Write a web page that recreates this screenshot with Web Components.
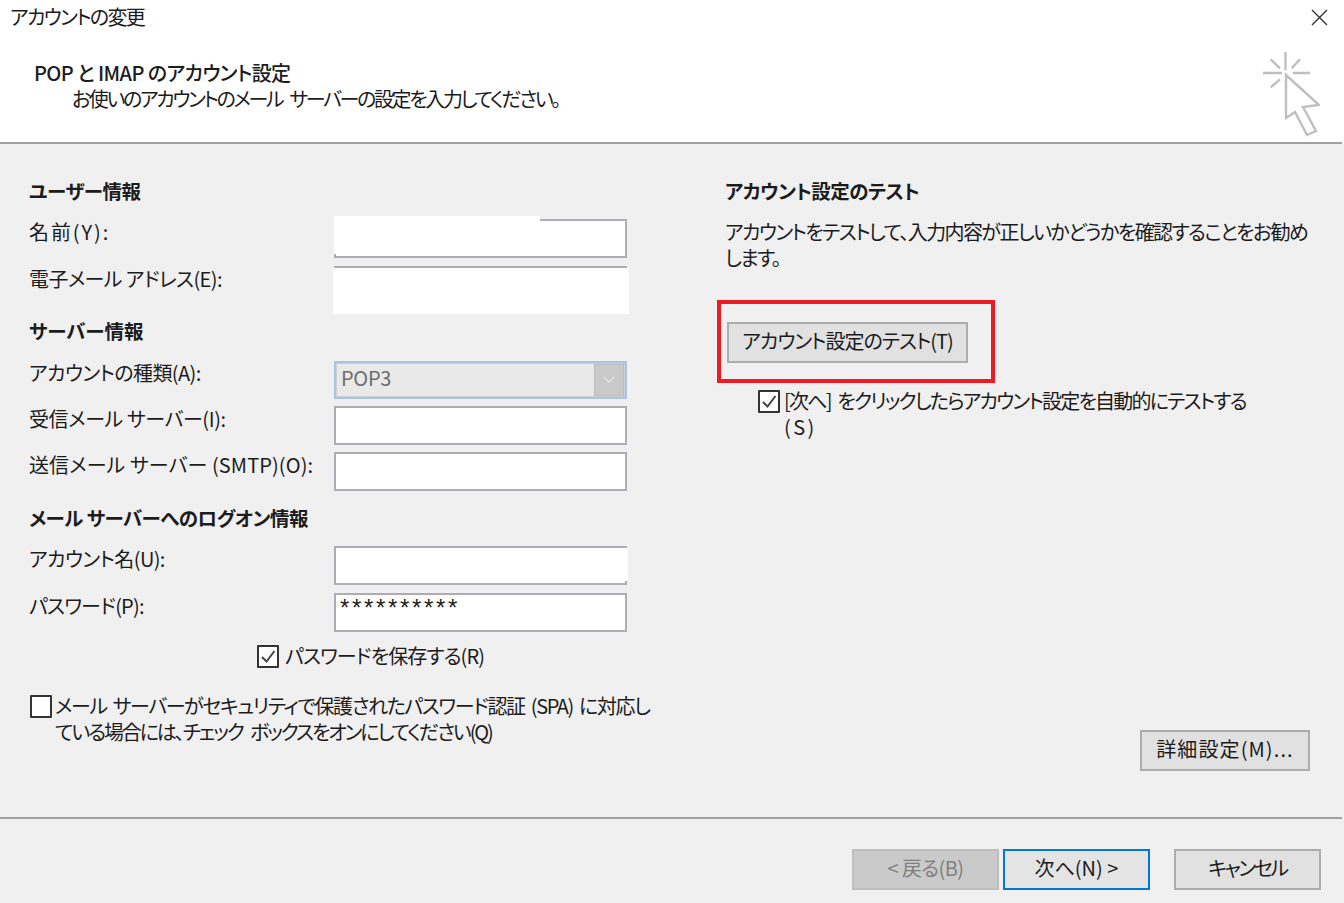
<!DOCTYPE html>
<html lang="ja"><head><meta charset="utf-8">
<style>
html,body{margin:0;padding:0;height:100%}
body{font-family:"Noto Sans CJK JP","Noto Sans",sans-serif;font-size:20px;color:#1c1c1c;background:#f0f0f0;font-feature-settings:"palt";letter-spacing:-.6px;overflow:hidden}
x-dialog{height:903px}
.l1{letter-spacing:-1.4px;word-spacing:3px}
.l2{letter-spacing:-2.1px;word-spacing:5px}
</style></head><body>
<x-dialog>
  <x-header slot="header" title-text="アカウントの変更" heading="POP と IMAP のアカウント設定" sub="お使いのアカウントのメール サーバーの設定を入力してください。"></x-header>
  <x-section slot="left" heading="ユーザー情報" top="0" gap="8">
    <x-row label="名前(Y):" ls="1.9" mask="name"></x-row>
    <x-row label="電子メール アドレス(E):" mask="email"></x-row>
  </x-section>
  <x-section slot="left" heading="サーバー情報" ls="0" top="15" gap="7" head-gap="18">
    <x-row label="アカウントの種類(A):" kind="select" value="POP3"></x-row>
    <x-row label="受信メール サーバー(I):" ls="-.4"></x-row>
    <x-row label="送信メール サーバー (SMTP)(O):" ls=".1"></x-row>
  </x-section>
  <x-section slot="left" heading="メール サーバーへのログオン情報" top="16" gap="8">
    <x-row label="アカウント名(U):" mask="right"></x-row>
    <x-row label="パスワード(P):" ls="-.8" value="**********"></x-row>
  </x-section>
  <x-check slot="left" checked style="margin:11px 0 0 228px;letter-spacing:-.9px;--gap:6px">パスワードを保存する(R)</x-check>
  <x-check slot="left" style="margin:24px 0 0 1px;--gap:3px"><span class="l1">メール サーバーがセキュリティで保護されたパスワード認証 (SPA) に対応し</span><br><span class="l2">ている場合には、チェック ボックスをオンにしてください(Q)</span></x-check>

  <x-test-panel slot="right"></x-test-panel>
  <x-btn slot="extra" style="width:170px;letter-spacing:1.1px">詳細設定(M)...</x-btn>

  <x-btn slot="footer" kind="disabled" style="width:147px">&lt; 戻る(B)</x-btn>
  <x-btn slot="footer" kind="default" style="width:147px;margin-left:4px;letter-spacing:0">次へ(N) &gt;</x-btn>
  <x-btn slot="footer" style="width:147px;margin-left:24px;letter-spacing:-2.4px">キャンセル</x-btn>
</x-dialog>
<script>
function def(name,css,html,init){
  customElements.define(name,class extends HTMLElement{
    connectedCallback(){
      if(this.shadowRoot)return;
      const s=this.attachShadow({mode:'open'});
      s.innerHTML='<style>'+css+'</style>'+(typeof html==='function'?html(this):html);
      if(init)init(this,s);
    }
  });
}
const attr=(e,n,d='')=>e.hasAttribute(n)?e.getAttribute(n):d;
def('x-dialog',`
:host{display:flex;flex-direction:column;background:#f0f0f0}
.main{flex:none;height:673px;display:grid;grid-template-columns:696px 1fr;padding:36px 0 0 29px;box-sizing:border-box;position:relative}
.left{display:flex;flex-direction:column;align-items:stretch;width:640px}
.right{display:flex;flex-direction:column;height:100%}
.extra{display:flex;justify-content:flex-end;margin:auto 34px 46px 0}
.rule{height:2px;background:#a0a0a0;margin-right:2px}
.footer{display:flex;justify-content:flex-end;padding:30px 23px 0 0}
`,`<slot name="header"></slot>
<div class="main"><div class="left"><slot name="left"></slot></div>
<div class="right"><slot name="right"></slot><div class="extra"><slot name="extra"></slot></div></div></div>
<div class="rule"></div>
<div class="footer"><slot name="footer"></slot></div>`);

def('x-header',`
:host{display:block;height:144px;box-sizing:border-box;background:#fff;position:relative;color:#1c1c1c}
.bar{height:34px;display:flex;justify-content:space-between;align-items:center;padding:0 15px 0 10px}
.t{line-height:34px;letter-spacing:-1.7px}
.banner{display:flex;justify-content:space-between;height:108px;padding:0 24px 0 34px;box-sizing:border-box}
.h{font-weight:500;line-height:26px;margin-top:26px}
.s{margin-left:38px;line-height:26px;letter-spacing:-2.35px;word-spacing:5px}
svg{display:block}
.icon{margin-top:16px}
.rule{position:absolute;left:0;right:2px;bottom:0;height:2px;background:#a0a0a0}
`,e=>`<div class="bar"><span class="t">${attr(e,'title-text')}</span>
<svg width="19" height="19" viewBox="0 0 19 19" fill="none" stroke="#333" stroke-width="1.4"><path d="M2 2 17 17M17 2 2 17"/></svg></div>
<div class="banner"><div><div class="h">${attr(e,'heading')}</div><div class="s">${attr(e,'sub')}</div></div>
<svg class="icon" width="60" height="88" viewBox="0 0 60 88" fill="none" stroke="#bfbfbf" stroke-width="2.4"><path d="M25.5 2V20M3 23H22M33 23H50M10.7 9.3 20 18.3M40 9.3 31.7 18.3M10.7 37.3 20 29.3"/><path d="M26 25 59 55 43 57 56 81 47 85 35 62 26 68Z"/></svg></div>
<div class="rule"></div>`);

def('x-section',`
:host{display:block}
.h{font-weight:700;line-height:22px;letter-spacing:-.5px;font-size:19.5px;color:#1c1c1c}
.rows{display:flex;flex-direction:column}
`,e=>`<div class="h" style="margin-top:${attr(e,'top','0')}px;margin-bottom:${attr(e,'head-gap','17')}px;${e.hasAttribute('ls')?'letter-spacing:'+attr(e,'ls')+'px':''}">${attr(e,'heading')}</div>
<div class="rows" style="gap:${attr(e,'gap','7')}px"><slot></slot></div>`);

def('x-row',`
:host{display:grid;grid-template-columns:305px 293px;height:39px}
.l{line-height:26px;white-space:nowrap}
.f{position:relative;box-sizing:border-box;height:39px;background:#fff;border:2px solid #adadb3;padding:0 4px;line-height:26px;font-size:24px;color:#222;letter-spacing:2.65px;font-family:"Liberation Sans",sans-serif}
.m{position:absolute;background:#fff}
.sel{position:relative;box-sizing:border-box;height:38px;margin-top:1px;background:#e9e9e9;border:2px solid #a9c4e2;outline:1px solid #cfcfcf;outline-offset:-3px;line-height:30px;padding-left:5px;color:#6f6f6f;letter-spacing:-.3px}
.arr{position:absolute;right:1px;top:1px;bottom:1px;width:30px;background:#c9c9c9;border:1px solid #bdbdbd;box-sizing:border-box;display:flex;align-items:center;justify-content:center}
`,e=>{
  const k=attr(e,'kind'),v=attr(e,'value'),m=attr(e,'mask');
  let inner;
  if(k==='select'){
    inner=`<div class="sel">${v}<div class="arr"><svg width="12" height="8" viewBox="0 0 12 8" fill="none" stroke="#e6e6e6" stroke-width="1.4"><path d="M1 1 6 6 11 1"/></svg></div></div>`;
  }else{
    let mk='';
    if(m==='name')mk='<div class="m" style="left:-2px;top:-5px;width:206px;height:8px"></div><div class="m" style="left:-2px;top:0;width:2px;height:33px"></div>';
    if(m==='email')mk='<div class="m" style="left:-3px;top:0;width:296px;height:46px"></div>';
    if(m==='right')mk='<div class="m" style="right:-3px;top:0;width:3px;height:33px"></div>';
    inner=`<div class="f">${v}${mk}</div>`;
  }
  const ls=e.hasAttribute('ls')?` style="letter-spacing:${attr(e,'ls')}px"`:'';
  return `<div class="l"${ls}>${attr(e,'label')}</div>${inner}`;
});

def('x-check',`
:host{display:flex;align-items:flex-start;gap:var(--gap,5px)}
.b{flex:none;width:22px;height:23px;box-sizing:border-box;border:2px solid #333;background:#fff;margin-top:2px;display:block;border-radius:1px}
.b svg{display:block}
.t{line-height:26px;white-space:nowrap}
`,e=>`<span class="b">${e.hasAttribute('checked')?'<svg width="18" height="19" viewBox="0 0 18 19" fill="none" stroke="#444" stroke-width="2"><path d="M3 10 7.5 14.5 15.5 4"/></svg>':''}</span><span class="t"><slot></slot></span>`);

def('x-btn',`
:host{display:block;flex:none;box-sizing:border-box;height:41px;background:#e1e1e1;border:2px solid #adadad;text-align:center;line-height:33px;white-space:nowrap;color:#1c1c1c}
:host([kind=disabled]){background:#cacaca;border-color:#bfbfbf;color:#808080}
:host([kind=default]){border-color:#0078d7;background:#e4e4e4}
`,`<slot></slot>`);

def('x-test-panel',`
:host{display:block;width:600px}
.h{font-weight:700;line-height:22px;letter-spacing:-.5px;font-size:19.5px;margin-bottom:17px}
p{margin:0;line-height:26px;white-space:nowrap;letter-spacing:-1.6px}
.red{display:inline-block;box-sizing:border-box;width:278px;height:83px;border:4px solid #ed1c24;padding:18px 0 0 6px;margin:29px 0 0 -8px}
.red x-btn{width:241px;letter-spacing:-1px;line-height:34px}
.chk{margin:5px 0 0 33px;--gap:4px}
.c1{letter-spacing:-1.8px;word-spacing:4px}
.c2{letter-spacing:2.4px}
`,`<div class="h">アカウント設定のテスト</div>
<p>アカウントをテストして、入力内容が正しいかどうかを確認することをお勧め<br>します。</p>
<div class="red"><x-btn>アカウント設定のテスト(T)</x-btn></div>
<x-check class="chk" checked><span class="c1">[次へ] をクリックしたらアカウント設定を自動的にテストする</span><br><span class="c2">(S)</span></x-check>`);
</script>
</body></html>
